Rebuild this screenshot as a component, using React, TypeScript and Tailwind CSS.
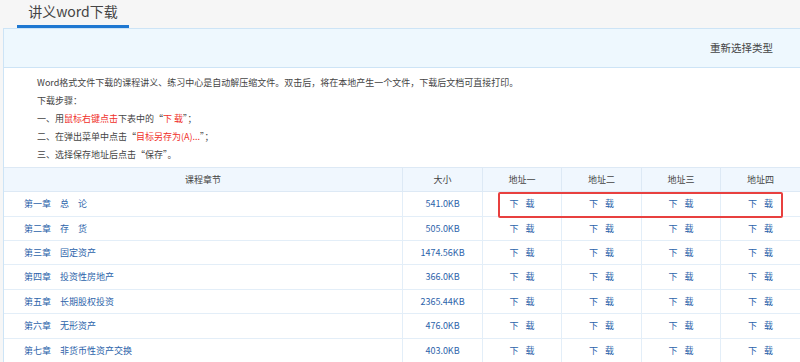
import React from "react";

const rows = [
  { name: "第一章　总　论", size: "541.0KB", h: "h-[25px]" },
  { name: "第二章　存　货", size: "505.0KB", h: "h-[24px]" },
  { name: "第三章　固定资产", size: "1474.56KB", h: "h-[24px]" },
  { name: "第四章　投资性房地产", size: "366.0KB", h: "h-[25px]" },
  { name: "第五章　长期股权投资", size: "2365.44KB", h: "h-[24px]" },
  { name: "第六章　无形资产", size: "476.0KB", h: "h-[25px]" },
  { name: "第七章　非货币性资产交换", size: "403.0KB", h: "h-[24px]" },
];

const cols = "grid grid-cols-[398px_80px_79px_80px_79px_80px]";

function Dl() {
  return (
    <span className="text-[#2c63aa]">
      下<span className="ml-[7px]">载</span>
    </span>
  );
}

export default function App() {
  return (
    <div
      className="w-[800px] h-[362px] overflow-hidden bg-[#f6f6f6] text-[#333]"
      style={{ fontFamily: '"Noto Sans CJK SC", "Noto Sans", sans-serif' }}
    >
      <div className="h-[28px] flex">
        <div className="ml-[17px] w-[112px] border-b-[3px] border-[#1f78d1] flex items-center justify-center text-[14px] leading-none text-[#444] pb-[4px]">
          讲义word下载
        </div>
      </div>
      <div className="ml-[3px] border-l border-t border-[#cde4f6] bg-white">
        <div className="h-[39px] bg-[#eef8fe] border-b border-[#cde4f6] flex items-center justify-end pr-[27px] text-[10.5px] text-[#444]">
          重新选择类型
        </div>
        <div className="pl-[33px] pt-[6px] pb-[3px] text-[9px] leading-[18px] text-[#444]">
          <div>Word格式文件下载的课程讲义、练习中心是自动解压缩文件。双击后，将在本地产生一个文件，下载后文档可直接打印。</div>
          <div>下载步骤：</div>
          <div>
            一、用<span className="text-[#f0302a]">鼠标右键点击</span>下表中的“<span className="text-[#f0302a]">下 载</span>”；
          </div>
          <div>
            二、在弹出菜单中点击“<span className="text-[#f0302a]">目标另存为(A)...</span>”；
          </div>
          <div>三、选择保存地址后点击“保存”。</div>
        </div>
        <div className="relative text-[9px]">
          <div className={`${cols} h-[25px] bg-[#f0f7fe] border-t border-b border-[#dde9f5] text-[#444]`}>
            <div className="flex items-center justify-center">课程章节</div>
            <div className="flex items-center justify-center border-l border-[#dde9f5]">大小</div>
            <div className="flex items-center justify-center border-l border-[#dde9f5]">地址一</div>
            <div className="flex items-center justify-center border-l border-[#dde9f5]">地址二</div>
            <div className="flex items-center justify-center border-l border-[#dde9f5]">地址三</div>
            <div className="flex items-center justify-center border-l border-[#dde9f5]">地址四</div>
          </div>
          {rows.map((r) => (
            <div key={r.name} className={`${cols} ${r.h} border-b border-[#e3eef8]`}>
              <div className="flex items-center pl-[20px] text-[#2c63aa]">{r.name}</div>
              <div className="flex items-center justify-center border-l border-[#e3eef8] text-[#2c63aa]">{r.size}</div>
              <div className="flex items-center justify-center border-l border-[#e3eef8]"><Dl /></div>
              <div className="flex items-center justify-center border-l border-[#e3eef8]"><Dl /></div>
              <div className="flex items-center justify-center border-l border-[#e3eef8]"><Dl /></div>
              <div className="flex items-center justify-center border-l border-[#e3eef8]"><Dl /></div>
            </div>
          ))}
          <div className="absolute left-[494px] top-[25px] w-[285px] h-[26px] border-2 border-[#e8403f] rounded-[2px]" />
        </div>
      </div>
    </div>
  );
}
